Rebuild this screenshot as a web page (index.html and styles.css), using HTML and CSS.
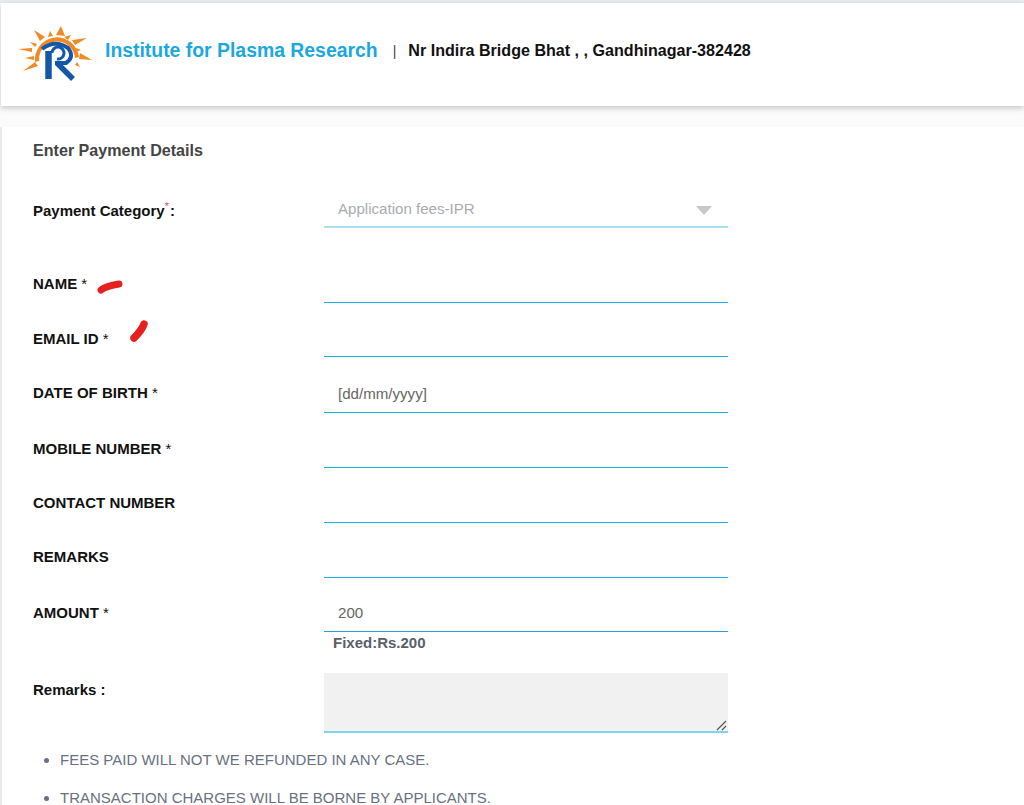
FILE: index.html
```html
<!DOCTYPE html>
<html lang="en">
<head>
<meta charset="utf-8">
<title>Enter Payment Details</title>
<link rel="stylesheet" href="styles.css">
</head>
<body>
<header class="header">
  <svg class="logo" width="76" height="56" viewBox="0 0 76 56" aria-hidden="true">
    <g fill="#f08a24">
      <path d="M17 37 A 22 22 0 0 1 61 32 L57 33 A 18 18 0 0 0 21 36 Z"/>
      <path d="M16 5 L27 12 L22 16 Z"/>
      <path d="M32 6 L35 11 L30 12 Z"/>
      <path d="M43 1 L47 11 L38 10 Z"/>
      <path d="M53 10 L50 15 L46 12 Z"/>
      <path d="M69 13 L57 20 L54 15 Z"/>
      <path d="M63 25 L58 27 L58 23 Z"/>
      <path d="M74 35 L61 34 L62 28 Z"/>
      <path d="M62 42 L57 40 L59 37 Z"/>
      <path d="M0 24 L14 23 L14 27 Z"/>
      <path d="M12 17 L19 19 L17 22 Z"/>
      <path d="M7 33 L16 31 L16 35 Z"/>
      <path d="M5 46 L17 37 L20 41 Z"/>
    </g>
    <g fill="none" stroke="#1358a8">
      <path d="M24 24 Q 37 14 50 23 Q 57 32 48 38 H 37" stroke-width="4"/>
      <path d="M30.5 54 V 26" stroke-width="6.5"/>
      <path d="M34 28 A 6 6 0 1 1 39 34" stroke-width="3"/>
      <path d="M39 38 L 55 54" stroke-width="5.5"/>
    </g>
  </svg>
  <span class="org">Institute for Plasma Research</span>
  <span class="sep">|</span>
  <span class="addr">Nr Indira Bridge Bhat , , Gandhinagar-382428</span>
</header>
<main class="card">
  <h1 class="title">Enter Payment Details</h1>
  <form class="form">
    <div class="row row-cat">
      <label class="label">Payment Category<sup class="req">*</sup>:</label>
      <div class="field select muted"><span>Application fees-IPR</span><i class="caret"></i></div>
    </div>
    <div class="row row-name">
      <label class="label">NAME <span class="star">*</span></label>
      <div class="field"></div>
      <svg class="mark mark-name" width="30" height="18" viewBox="0 0 30 18" aria-hidden="true"><path d="M5 12 C10 8 16 7 23 6" fill="none" stroke="#e71f1f" stroke-width="7" stroke-linecap="round"/></svg>
    </div>
    <div class="row row-short">
      <label class="label label-low">EMAIL ID <span class="star">*</span></label>
      <div class="field"></div>
      <svg class="mark mark-email" width="24" height="26" viewBox="0 0 24 26" aria-hidden="true"><path d="M6 20 C10 16 14 12 16 6" fill="none" stroke="#e71f1f" stroke-width="7.5" stroke-linecap="round"/></svg>
    </div>
    <div class="row row-tall">
      <label class="label label-high">DATE OF BIRTH <span class="star">*</span></label>
      <div class="field value">[dd/mm/yyyy]</div>
    </div>
    <div class="row">
      <label class="label">MOBILE NUMBER <span class="star">*</span></label>
      <div class="field"></div>
    </div>
    <div class="row">
      <label class="label label-high">CONTACT NUMBER</label>
      <div class="field"></div>
    </div>
    <div class="row">
      <label class="label label-higher">REMARKS</label>
      <div class="field"></div>
    </div>
    <div class="row row-short row-amount">
      <label class="label">AMOUNT <span class="star">*</span></label>
      <div class="field value">200</div>
    </div>
    <div class="hint">Fixed:Rs.200</div>
    <div class="row row-remarks">
      <label class="label">Remarks :</label>
      <div class="area">
        <svg class="grip" width="11" height="11" viewBox="0 0 11 11" aria-hidden="true"><path d="M1 10 L10 1 M6 10 L10 6" stroke="#555" stroke-width="1.2"/></svg>
      </div>
    </div>
  </form>
  <ul class="notes">
    <li>FEES PAID WILL NOT WE REFUNDED IN ANY CASE.</li>
    <li>TRANSACTION CHARGES WILL BE BORNE BY APPLICANTS.</li>
  </ul>
</main>
</body>
</html>
```
FILE: styles.css
```css
* { box-sizing: border-box; }
html, body { height: 805px; overflow: hidden; }
body {
  margin: 0;
  padding: 3px 0 0;
  background: #fbfbfb;
  font-family: "Liberation Sans", Arial, sans-serif;
  position: relative;
}
body::before {
  content: "";
  position: absolute;
  inset: 0 0 auto 0;
  height: 3px;
  background: #e9edf1;
}
.header {
  height: 103px;
  margin-left: 1px;
  background: #fff;
  box-shadow: 0 2px 6px rgba(0,0,0,.22);
  display: flex;
  align-items: flex-start;
  padding: 22px 0 0 17px;
  position: relative;
}
.logo { flex: none; margin-right: 11px; }
.org {
  font-size: 19.4px;
  font-weight: 700;
  color: #1ba8e0;
  margin-top: 13px;
  line-height: 24px;
}
.sep {
  font-size: 14px;
  color: #444;
  margin: 17px 0 0 15px;
  line-height: 18px;
}
.addr {
  font-size: 16.1px;
  font-weight: 700;
  color: #111;
  margin: 16px 0 0 12px;
  line-height: 18px;
}
.card {
  margin: 21px 0 0;
  height: 700px;
  background: #fff;
  border-left: 2px solid #e8e8e8;
  padding: 14px 0 0 31px;
}
.title {
  margin: 0;
  font-size: 16.1px;
  line-height: 19px;
  font-weight: 700;
  color: #444;
}
.form { margin-top: 36px; }
.row {
  display: grid;
  grid-template-columns: 291px 404px;
  align-items: end;
  height: 55px;
  position: relative;
}
.row-cat { height: 32px; align-items: start; }
.row-name { height: 75px; }
.row-short { height: 54px; }
.row-tall { height: 56px; }
.label {
  font-size: 15px;
  line-height: 18px;
  font-weight: 700;
  color: #111;
  padding-bottom: 10px;
  box-sizing: content-box;
}
.label-low { padding-bottom: 9px; }
.label-high { padding-bottom: 11px; }
.label-higher { padding-bottom: 12px; }
.star { font-weight: 400; }
.row-cat .label { padding: 6px 0 0; }
.req { color: #e8465a; font-size: 11px; font-weight: 400; line-height: 0; margin-right: 1px; }
.field {
  height: 100%;
  padding: 0 0 9px 14px;
  font-size: 15.1px;
  line-height: 18px;
  border-bottom: 1px solid #17b3e6;
  display: flex;
  align-items: flex-end;
}
.row-cat .field {
  padding: 4px 0 0 14px;
  border-bottom: 2px solid #a5e2f4;
  align-items: flex-start;
  justify-content: space-between;
}
.muted { color: #a8acb0; }
.caret {
  width: 0; height: 0;
  margin: 6px 16px 0 0;
  border: 8px solid transparent;
  border-top: 9px solid #c8c8c8;
  border-bottom: 0;
}
.value { color: #666; }
.row-amount .field { border-bottom-color: #2a9fd6; }
.hint {
  height: 41px;
  padding: 2px 0 0 300px;
  font-size: 15px;
  line-height: 18px;
  font-weight: 700;
  color: #58606c;
}
.row-remarks { height: 60px; align-items: start; }
.row-remarks .label { padding: 8px 0 0; }
.area {
  height: 60px;
  background: #f1f1f1;
  border-bottom: 2px solid #7fd4ef;
  position: relative;
}
.grip { position: absolute; right: 1px; bottom: 0; }
.mark { position: absolute; }
.mark-name { left: 63px; top: 50px; }
.mark-email { left: 95px; top: 15px; }
.notes {
  margin: 18px 0 0;
  padding: 0 0 0 27px;
  list-style: disc;
  font-size: 15px;
  line-height: 18px;
  color: #687182;
}
.notes li { margin-bottom: 20px; }
```
